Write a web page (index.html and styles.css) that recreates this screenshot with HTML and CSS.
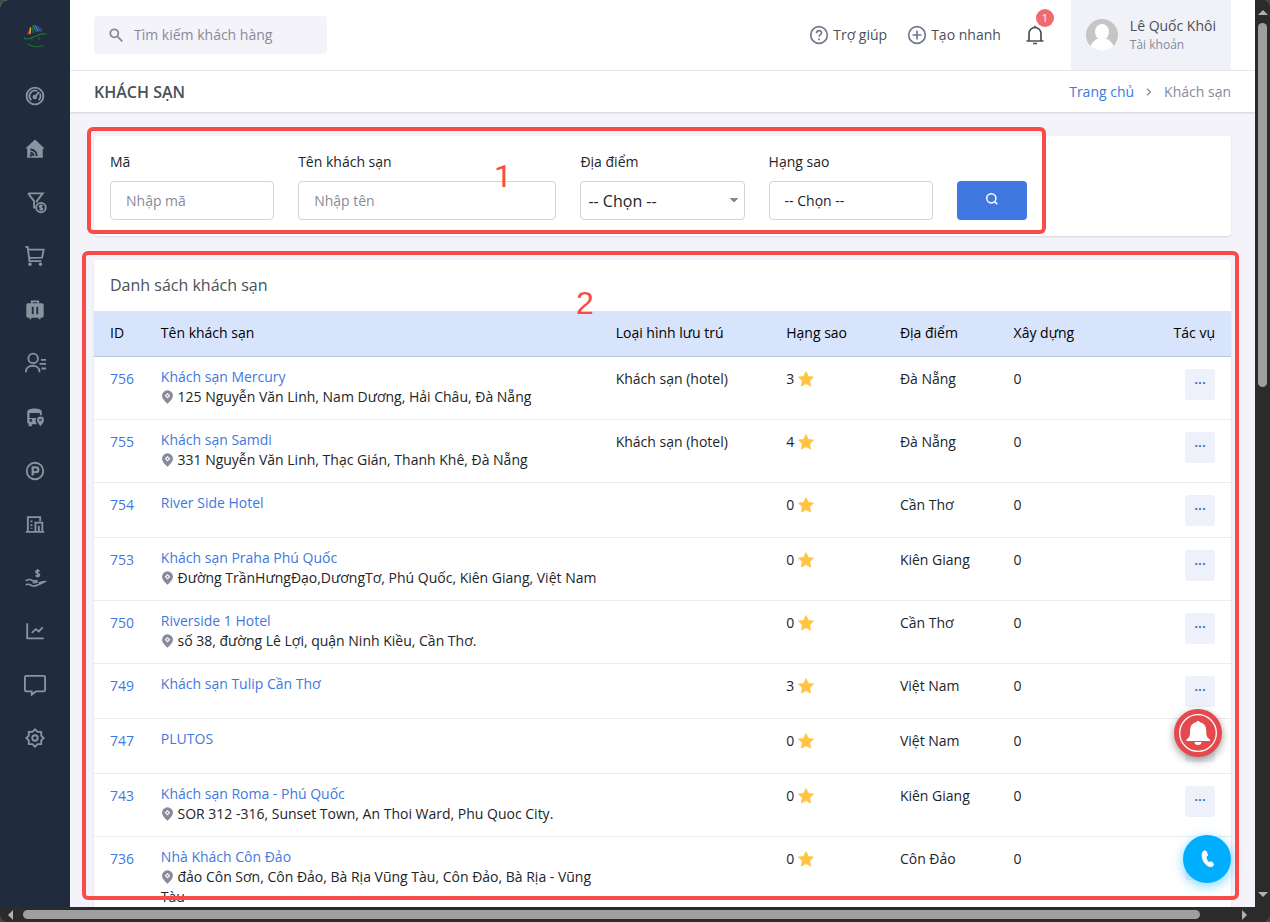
FILE: index.html
```html
<!DOCTYPE html>
<html lang="vi">
<head>
<meta charset="utf-8">
<title>Khách sạn</title>
<link rel="stylesheet" href="styles.css">
</head>
<body>
<svg class="sprite" aria-hidden="true">
  <symbol id="star" viewBox="0 0 16 16"><path d="M8 .6l2.3 4.8 5.2.7-3.8 3.7.9 5.3L8 12.600 3.400 15.100l.9-5.300L.5 6.100l5.200-.7z" fill="#ffc542" stroke="#ffc542" stroke-width=".8" stroke-linejoin="round"/></symbol>
  <symbol id="pin" viewBox="0 0 12 14"><path d="M6 .3a5.500 5.500 0 0 0-5.500 5.500C.5 9.200 6 13.800 6 13.800s5.500-4.600 5.500-8A5.500 5.500 0 0 0 6 .3z" fill="#878a9b"/><path d="M6 3l2.800 2.800L6 8.600 3.200 5.800z" fill="#fff"/><circle cx="6" cy="5.800" r="1" fill="#878a9b"/></symbol>
</svg>
<div class="frame">
  <div class="app">
    <aside class="sidebar">
      <a class="logo" href="#" aria-label="Trang chủ">
        <svg width="26" height="26" viewBox="0 0 26 26" fill="none" stroke-linecap="round">
          <path d="M2 15.500c1 3 7 1 12-1.500 4-2 7-2.500 10-2" stroke="#1f7a35" stroke-width="1.100"/>
          <path d="M6 12l1.500-3.500" stroke="#c0322c" stroke-width="1.500"/>
          <path d="M8 11.500L8.500 6" stroke="#d8b62d" stroke-width="1.500"/>
          <path d="M11 10.500L11 3.500M11 3.500l3 6" stroke="#247a3a" stroke-width="1.200"/>
          <path d="M13 3.500l3 5.500" stroke="#3a7fd5" stroke-width="1.500"/>
          <path d="M16 4.500l2 4.500" stroke="#3158a8" stroke-width="1.500"/>
          <path d="M19 6.500l.5 2.500" stroke="#6a3fa0" stroke-width="1.200"/>
          <path d="M10 16v2M17 15v2.500M6 22c3 3 10 3.500 15 1.500" stroke="#1f6a32" stroke-width="1.100"/>
        </svg>
      </a>
      <nav class="menu">
        <a href="#" aria-label="Bảng điều khiển"><svg viewBox="0 0 24 24"><circle cx="12" cy="12" r="9.200"/><path d="M8 16.500A6 6 0 0 1 14.500 6.600M17.400 9.500A6 6 0 0 1 16 16.500"/><path d="M11 14l5.500-6.500"/><circle class="fill" cx="11.800" cy="13" r="1.500"/></svg></a>
        <a href="#" aria-label="Nhà"><svg viewBox="0 0 24 24"><path class="solid" d="M12 1.500L22.500 11.500H20.500V21.500h-17V11.500H1.500z"/><g class="cut"><path d="M7 12.500a7 7 0 0 1 7 7M7 16a3.500 3.500 0 0 1 3.500 3.500"/><circle cx="7.600" cy="19" r=".5"/></g></svg></a>
        <a href="#" aria-label="Phễu bán hàng"><svg viewBox="0 0 24 24"><path d="M4.500 1.500h16l-6.500 8.500v1.500M4.500 1.500L11 10v7h1.500"/><circle cx="18.500" cy="17" r="5.200"/><path class="thin" d="M20.300 15.300c-.5-1-3.300-1-3.300.4 0 1.600 3.300.9 3.300 2.500 0 1.500-2.700 1.300-3.500.4M18.600 13.500v7"/></svg></a>
        <a href="#" aria-label="Đơn hàng"><svg viewBox="0 0 24 24"><path d="M1.500 2H4l2 15.500h13M5 5h16.500l-1.800 8.800L5.700 14"/><circle class="fill" cx="6.500" cy="21" r="1"/><circle class="fill" cx="18" cy="21" r="1"/></svg></a>
        <a href="#" aria-label="Tour"><svg viewBox="0 0 24 24"><path d="M8.500 5V2.500h7V5"/><rect class="solid" x="2.500" y="4.500" width="19" height="16" rx="2"/><path d="M7 20v2M17 20v2"/><path class="cut" d="M9.500 8.500v8M14.500 8.500v8"/></svg></a>
        <a href="#" aria-label="Khách hàng"><svg viewBox="0 0 24 24"><circle cx="10" cy="7" r="5.200"/><path d="M2.200 22v-1c0-8 14.600-8 14.600 0v1M18.500 8.500H24M17 13h7M19 18h5"/></svg></a>
        <a href="#" aria-label="Xe"><svg viewBox="0 0 24 24"><path class="solid" d="M3.500 18V6.500C3.500 1.500 19.500 1.500 19.500 6.500V10h-2.200V7.500H6V13h7.500l-1 3 1.500 4H8.500v2H5v-2.500z"/><circle class="cut" cx="7.500" cy="15.800" r=".6"/><path class="solid" d="M18 11.500a3.800 3.800 0 0 0-3.800 3.800c0 2.700 3.800 6.700 3.800 6.700s3.800-4 3.800-6.700a3.800 3.800 0 0 0-3.800-3.800z"/><circle class="cut" cx="18" cy="15.200" r=".4"/></svg></a>
        <a href="#" aria-label="Khuyến mãi"><svg viewBox="0 0 24 24"><circle cx="12" cy="12" r="9"/><path class="thick" d="M9.500 17V8H13c3.500 0 3.500 5.200 0 5.200H9.500"/></svg></a>
        <a href="#" aria-label="Khách sạn"><svg viewBox="0 0 24 24"><path d="M2 20.500h20M4.200 20V4.500h13.500V9M12.500 20v-9.500h7.500V20M16.200 20v-6"/><path class="dots" d="M8.200 8.200v9"/></svg></a>
        <a href="#" aria-label="Tài chính"><svg viewBox="0 0 24 24"><path class="thin" d="M16.800 4.800c-.7-1.600-4-1.400-4 .5 0 2.400 4.200 1.100 4.200 3.500 0 2-3.600 2-4.300.2M14.900 2.200v9.300M2 15c3-2 5-1.800 7.500 0H14c1 1.500-1 2.300-4.500 2M2 19.500c3-2 4.500 0 7 1 3 1 5-.3 14-4.500-2-.5-4 .2-7 1.500"/></svg></a>
        <a href="#" aria-label="Báo cáo"><svg viewBox="0 0 24 24"><path d="M3.500 3.500V20H21.500M8.500 14l4.500-4 3 2.500 4.500-4.500"/></svg></a>
        <a href="#" aria-label="Tin nhắn"><svg viewBox="0 0 24 24"><path d="M2.500 2h19a1.500 1.500 0 0 1 1.500 1.500v14a1.500 1.500 0 0 1-1.500 1.500H13l-4.500 3.500V19h-6A1.500 1.500 0 0 1 1 17.500v-14A1.500 1.500 0 0 1 2.500 2z"/></svg></a>
        <a href="#" aria-label="Cài đặt"><svg viewBox="0 0 24 24"><path d="M12 2.500l2.800 2.800h4v4L21.500 12l-2.700 2.700v4h-4L12 21.500l-2.800-2.800h-4v-4L2.500 12l2.700-2.700v-4h4z"/><circle cx="12" cy="12" r="3"/></svg></a>
      </nav>
    </aside>

    <div class="page">
      <header class="topbar">
        <label class="search">
          <svg width="14" height="14" viewBox="0 0 14 14" fill="none" stroke="#878a99" stroke-width="1.800"><circle cx="5.300" cy="5.300" r="4"/><path d="M8.300 8.300l5 5"/></svg>
          <input type="search" placeholder="Tìm kiếm khách hàng" aria-label="Tìm kiếm khách hàng">
        </label>
        <div class="actions">
          <a class="action" href="#"><svg width="20" height="20" viewBox="0 0 20 20"><circle cx="10" cy="10" r="8.300"/><path d="M7.500 8.200c0-3.500 5-3.300 5-.3 0 1.600-2.500 1.800-2.500 3.900M10 13.500v1.700"/></svg>Trợ giúp</a>
          <a class="action" href="#"><svg width="20" height="20" viewBox="0 0 20 20"><circle cx="10" cy="10" r="8.300"/><path d="M10 5.500v9M5.500 10h9"/></svg>Tạo nhanh</a>
          <button class="bell" type="button" aria-label="Thông báo">
            <svg width="20" height="20" viewBox="0 0 20 20" fill="none" stroke="#495057" stroke-width="1.700"><path d="M1.500 16h17M4 15.500V8.500a6 6 0 0 1 12 0v7"/><path d="M8 18.500h4M10 .8v1.700"/></svg>
            <span class="badge">1</span>
          </button>
          <button class="user" type="button">
            <svg width="32" height="32" viewBox="0 0 32 32"><clipPath id="av"><circle cx="16" cy="16" r="16"/></clipPath><g clip-path="url(#av)"><path fill="#c5c5c5" d="M0 0h32v32H0z"/><ellipse cx="16" cy="13" rx="7" ry="8" fill="#fff"/><path fill="#fff" d="M3 32c1-6 4-10 8-12h10c4 2 7 6 8 12z"/></g></svg>
            <span class="who"><span class="name">Lê Quốc Khôi</span><span class="role">Tài khoản</span></span>
          </button>
        </div>
      </header>

      <div class="titlebar">
        <h1>KHÁCH SẠN</h1>
        <nav class="crumbs"><a href="#">Trang chủ</a><svg width="6" height="8" viewBox="0 0 6 8" fill="none" stroke="#878a99" stroke-width="1.300"><path d="M1 .7L4.500 4 1 7.300"/></svg><span>Khách sạn</span></nav>
      </div>

      <main class="content">
        <form class="card filter">
          <div class="field w2"><label for="code">Mã</label><input id="code" type="text" placeholder="Nhập mã"></div>
          <div class="field w3"><label for="name">Tên khách sạn</label><input id="name" type="text" placeholder="Nhập tên"></div>
          <div class="field w2"><label for="place">Địa điểm</label><select id="place" class="large"><option>-- Chọn --</option></select></div>
          <div class="field w2"><label for="stars">Hạng sao</label><select id="stars"><option>-- Chọn --</option></select></div>
          <button class="submit" type="submit" aria-label="Tìm"><svg width="14" height="14" viewBox="0 0 14 14" fill="none" stroke="#fff" stroke-width="1.500"><circle cx="6.300" cy="6.300" r="4.600"/><path d="M9.600 9.600l2.700 2.700"/></svg></button>
          <div class="mark mark-filter"><span>1</span></div>
        </form>

        <section class="card list">
          <h2>Danh sách khách sạn</h2>
          <table>
            <colgroup><col class="c-id"><col class="c-name"><col class="c-type"><col class="c-s"><col class="c-s"><col class="c-last"></colgroup>
            <thead><tr><th>ID</th><th>Tên khách sạn</th><th>Loại hình lưu trú</th><th>Hạng sao</th><th>Địa điểm</th><th><div class="split"><span>Xây dựng</span><span>Tác vụ</span></div></th></tr></thead>
            <tbody>
              <tr><td><a href="#">756</a></td><td><a href="#">Khách sạn Mercury</a><p><svg><use href="#pin"/></svg> 125 Nguyễn Văn Linh, Nam Dương, Hải Châu, Đà Nẵng</p></td><td>Khách sạn (hotel)</td><td>3 <svg><use href="#star"/></svg></td><td>Đà Nẵng</td><td><div class="split"><span>0</span><button type="button">...</button></div></td></tr>
              <tr><td><a href="#">755</a></td><td><a href="#">Khách sạn Samdi</a><p><svg><use href="#pin"/></svg> 331 Nguyễn Văn Linh, Thạc Gián, Thanh Khê, Đà Nẵng</p></td><td>Khách sạn (hotel)</td><td>4 <svg><use href="#star"/></svg></td><td>Đà Nẵng</td><td><div class="split"><span>0</span><button type="button">...</button></div></td></tr>
              <tr><td><a href="#">754</a></td><td><a href="#">River Side Hotel</a></td><td></td><td>0 <svg><use href="#star"/></svg></td><td>Cần Thơ</td><td><div class="split"><span>0</span><button type="button">...</button></div></td></tr>
              <tr><td><a href="#">753</a></td><td><a href="#">Khách sạn Praha Phú Quốc</a><p><svg><use href="#pin"/></svg> Đường TrầnHưngĐạo,DươngTơ, Phú Quốc, Kiên Giang, Việt Nam</p></td><td></td><td>0 <svg><use href="#star"/></svg></td><td>Kiên Giang</td><td><div class="split"><span>0</span><button type="button">...</button></div></td></tr>
              <tr><td><a href="#">750</a></td><td><a href="#">Riverside 1 Hotel</a><p><svg><use href="#pin"/></svg> số 38, đường Lê Lợi, quận Ninh Kiều, Cần Thơ.</p></td><td></td><td>0 <svg><use href="#star"/></svg></td><td>Cần Thơ</td><td><div class="split"><span>0</span><button type="button">...</button></div></td></tr>
              <tr><td><a href="#">749</a></td><td><a href="#">Khách sạn Tulip Cần Thơ</a></td><td></td><td>3 <svg><use href="#star"/></svg></td><td>Việt Nam</td><td><div class="split"><span>0</span><button type="button">...</button></div></td></tr>
              <tr><td><a href="#">747</a></td><td><a href="#">PLUTOS</a></td><td></td><td>0 <svg><use href="#star"/></svg></td><td>Việt Nam</td><td><div class="split"><span>0</span><button type="button">...</button></div></td></tr>
              <tr><td><a href="#">743</a></td><td><a href="#">Khách sạn Roma - Phú Quốc</a><p><svg><use href="#pin"/></svg> SOR 312 -316, Sunset Town, An Thoi Ward, Phu Quoc City.</p></td><td></td><td>0 <svg><use href="#star"/></svg></td><td>Kiên Giang</td><td><div class="split"><span>0</span><button type="button">...</button></div></td></tr>
              <tr><td><a href="#">736</a></td><td><a href="#">Nhà Khách Côn Đảo</a><p><svg><use href="#pin"/></svg> đảo Côn Sơn, Côn Đảo, Bà Rịa Vũng Tàu, Côn Đảo, Bà Rịa - Vũng Tàu</p></td><td></td><td>0 <svg><use href="#star"/></svg></td><td>Côn Đảo</td><td><div class="split"><span>0</span><button type="button">...</button></div></td></tr>
            </tbody>
          </table>
        </section>
      </main>
    </div>

    <button class="float alert" type="button" aria-label="Cảnh báo"><svg width="48" height="48" viewBox="0 0 48 48"><circle cx="24" cy="24" r="18.300" fill="none" stroke="#fff" stroke-width="1.300"/><path fill="#fff" d="M24 12c1 0 1.700.6 1.900 1.300 4.200.9 6.300 4 6.300 8.200 0 5.500.7 7 3.800 9v1.500H12.500v-1.500c3-2 3.600-3.500 3.600-9 0-4.200 2-7.300 6-8.200.2-.7.900-1.300 1.900-1.300zM20.500 33h7a3.500 3 0 0 1-7 0z"/></svg></button>
    <button class="float call" type="button" aria-label="Gọi"><svg width="48" height="48" viewBox="0 0 48 48"><path fill="#fff" stroke="#fff" stroke-width="1" stroke-linejoin="round" d="M20 17c1-1.400 2.700-1.500 3.300-.3l1.200 3c.3.900-.3 1.500-1.600 2 .3 2.600 1.500 4.600 3.300 6 1-.9 1.800-1.300 2.500-.7l1.600 1.900c.7 1-.3 2.400-1.900 2.700-4.700.7-9.800-6.300-9.200-12.300.1-.9.400-1.700.8-2.300z"/></svg></button>
    <div class="mark mark-list"><span>2</span></div>
  </div>

  <div class="vbar"><i class="arrow up"></i><i class="thumb"></i><i class="arrow down"></i></div>
  <div class="hbar"><i class="arrow left"></i><i class="thumb"></i><i class="arrow right"></i></div>
</div>
</body>
</html>
```
FILE: styles.css
```css
* { box-sizing: border-box; }
body {
  margin: 0;
  background: #4a4644;
  color: #212529;
  font: 14px/20px "Open Sans", "Noto Sans", sans-serif;
}
h1, h2, p { margin: 0; }
a { color: #3f78e0; text-decoration: none; }
button, input, select { font: inherit; color: inherit; }
button { border: 0; padding: 0; cursor: pointer; }
.sprite { position: absolute; width: 0; height: 0; }

/* Window */
.frame {
  display: grid;
  grid-template: minmax(0, 1fr) 15px / minmax(0, 1fr) 15px;
  height: 100vh;
  background: #2b2b2b;
  border-radius: 8px;
  overflow: hidden;
}
.app {
  position: relative;
  display: flex;
  overflow: hidden;
  background: #f3f3f9;
}
.vbar, .hbar { display: flex; align-items: center; gap: 5px; }
.vbar { flex-direction: column; padding: 10px 0 10px; }
.hbar { padding: 0 8px; }
.thumb { background: #9f9f9f; border-radius: 5px; }
.vbar .thumb { width: 9px; height: 41%; margin-top: 3px; }
.hbar .thumb { height: 9px; width: 95%; margin: 0 auto 0 5px; }
.arrow { border: 5px solid transparent; }
.up { border-bottom-color: #b0b0b0; border-top: 0; }
.down { border-top-color: #b0b0b0; border-bottom: 0; margin-top: auto; }
.left { border-right-color: #b0b0b0; border-left: 0; }
.right { border-left-color: #b0b0b0; border-right: 0; }

/* Sidebar */
.sidebar {
  flex: 0 0 70px;
  display: flex;
  flex-direction: column;
  padding-bottom: 142px;
  background: #202c3d;
}
.logo { display: grid; place-items: center; height: 69px; flex: none; }
.menu { flex: 1; display: grid; grid-auto-rows: minmax(0, 1fr); }
.menu a { display: grid; place-items: center; }
.menu svg {
  width: 22px;
  height: 22px;
  overflow: visible;
  fill: none;
  stroke: #8a949f;
  stroke-width: 2;
}
.menu .solid { fill: #8a949f; stroke: none; }
.menu .fill { fill: #8a949f; }
.menu .cut { stroke: #202c3d; }
.menu .thin { stroke-width: 1.7; }
.menu .thick { stroke-width: 2.5; }
.menu .dots { stroke-width: 2; stroke-dasharray: 2 2; }

/* Header */
.page { flex: 1; min-width: 0; }
.topbar {
  display: flex;
  justify-content: space-between;
  align-items: center;
  height: 71px;
  padding: 0 24px;
  background: #fff;
  border-bottom: 1px solid #e9ebf2;
}
.search {
  display: flex;
  align-items: center;
  gap: 11px;
  width: 233px;
  height: 38px;
  padding: 0 15px;
  background: #f3f3f9;
  border-radius: 4px;
}
.search svg { flex: none; }
.search input { width: 100%; min-width: 0; padding: 0; border: 0; background: none; outline: 0; }
::placeholder { color: #878a99; opacity: 1; }
.actions { display: flex; align-items: center; height: 100%; }
.action { display: flex; align-items: center; gap: 4px; margin-right: 20px; color: #495057; }
.action svg { fill: none; stroke: #74788d; stroke-width: 1.7; }
.bell { position: relative; height: 20px; margin: 0 26px 0 4px; background: none; }
.badge {
  position: absolute;
  left: 11px;
  top: -25px;
  width: 18px;
  border-radius: 9px;
  background: #f06c6c;
  color: #fff;
  font-size: 11px;
  line-height: 18px;
}
.bell svg { display: block; }
.bell .badge { top: -16px; }
.user { display: flex; align-items: center; gap: 12px; height: 100%; padding: 0 15px; background: #f1f1f8; text-align: left; }
.who { display: grid; }
.name { color: #495057; white-space: nowrap; }
.role { color: #878a99; font-size: 12px; line-height: 18px; }
.titlebar {
  position: relative;
  display: flex;
  justify-content: space-between;
  align-items: center;
  height: 41px;
  padding: 0 24px;
  background: #fff;
  box-shadow: 0 1px 2px rgba(56, 65, 74, .18);
}
h1 { font-size: 16px; font-weight: 600; color: #495057; }
.crumbs { display: flex; align-items: center; gap: 12px; color: #878a99; }

/* Cards */
.content { padding: 24px; }
.card { background: #fff; border-radius: 4px; box-shadow: 0 1px 2px rgba(56, 65, 74, .15); }
.filter {
  position: relative;
  display: grid;
  grid-template-columns: repeat(12, minmax(0, 1fr));
  gap: 24px;
  align-items: end;
  padding: 16px;
  margin-bottom: 24px;
}
.w2 { grid-column: span 2; }
.w3 { grid-column: span 3; }
.field label { display: block; margin-bottom: 9px; }
.field input, .field select {
  display: block;
  width: 100%;
  height: 39px;
  padding: 0 15px;
  border: 1px solid #ced4da;
  border-radius: 4px;
  background: #fff;
  appearance: none;
}
.field .large {
  padding: 0 7px;
  font-size: 16px;
  background-image: linear-gradient(to bottom left, #888 50%, transparent 50%), linear-gradient(to bottom right, #888 50%, transparent 50%);
  background-image: linear-gradient(to bottom right, #888 50%, transparent 50%), linear-gradient(to bottom left, #888 50%, transparent 50%);
  background-size: 4px 5px;
  background-position: right 6px center, right 10px center;
  background-repeat: no-repeat;
}
.submit { height: 39px; padding-bottom: 4px; border-radius: 4px; background: #3f78e0; }
.submit svg { display: block; margin: 0 auto; }

/* Hotel list */
h2 { padding: 15px 16px 16px; font-size: 16px; font-weight: 500; color: #495057; }
table { width: 100%; table-layout: fixed; border-collapse: separate; border-spacing: 0; }
.c-id { width: 5%; }
.c-name { width: 40%; }
.c-type { width: 15%; }
.c-s { width: 10%; }
.c-last { width: 20%; }
th {
  padding: 12px 10px 13px;
  background: #d8e4fb;
  border-bottom: 1px solid #b9c6df;
  color: #000;
  font-weight: 500;
  text-align: left;
}
td { padding: 12px 10px 11px; border-bottom: 1px solid #e9ebec; vertical-align: top; }
td:nth-child(2) { padding: 10px 0 12px 10px; }
th:first-child, td:first-child { padding-left: 16px; }
th:last-child, td:last-child { padding-right: 16px; }
td svg { width: 16px; height: 16px; vertical-align: -3px; }
td p svg { width: 13px; height: 14px; vertical-align: -2px; }
.split { display: flex; justify-content: space-between; align-items: flex-start; }
.split button {
  width: 30px;
  height: 31px;
  padding-bottom: 11px;
  border-radius: 3px;
  background: #eef1f9;
  color: #3f64b8;
  font-weight: 600;
}

/* Floating buttons */
.float { position: absolute; width: 48px; height: 48px; border-radius: 50%; }
.float svg { display: block; }
.alert { right: 33px; bottom: 150px; background: #e5484d; box-shadow: 0 3px 8px rgba(0, 0, 0, .4); }
.call { right: 24px; bottom: 24px; background: #00aeff; box-shadow: 0 3px 12px rgba(0, 174, 255, .5); }

/* Annotations */
.mark {
  position: absolute;
  border: 4px solid #f94c48;
  border-radius: 6px;
  color: #f94c48;
  font: 32px/36px "Liberation Sans", Arial, sans-serif;
  pointer-events: none;
}
.mark span { position: absolute; }
.mark-filter { inset: -9px 185px 2px -7px; font-family: Roboto, sans-serif; }
.mark-filter span { left: 403px; top: 27px; }
.mark-list { inset: 251px 16px 7px 82px; }
.mark-list span { left: 490px; top: 30px; }
```
